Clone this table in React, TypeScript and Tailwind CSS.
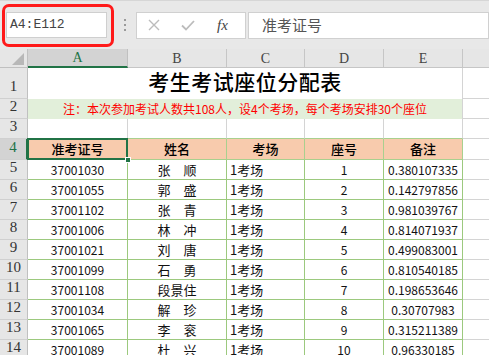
import React from "react";

const cjk = { fontFamily: "'Noto Sans CJK SC', 'Liberation Sans', sans-serif" };
const serif = { fontFamily: "'Liberation Serif', 'Noto Sans CJK SC', serif" };

const rows = [
  ["37001030", "张　顺", "1考场", "1", "0.380107335"],
  ["37001055", "郭　盛", "1考场", "2", "0.142797856"],
  ["37001102", "张　青", "1考场", "3", "0.981039767"],
  ["37001006", "林　冲", "1考场", "4", "0.814071937"],
  ["37001021", "刘　唐", "1考场", "5", "0.499083001"],
  ["37001099", "石　勇", "1考场", "6", "0.810540185"],
  ["37001108", "段景住", "1考场", "7", "0.198653646"],
  ["37001034", "解　珍", "1考场", "8", "0.30707983"],
  ["37001065", "李　衮", "1考场", "9", "0.315211389"],
  ["37001089", "杜　兴", "1考场", "10", "0.96330185"],
];

const RowHead = ({ n, h, active }: { n: number; h: string; active?: boolean }) => (
  <div
    className={`${h} w-[28px] shrink-0 flex items-end justify-center pb-[1px] text-[15px] border-b border-[#d0d0d0] ${
      active ? "bg-[#d3d3d3] text-[#217346] border-r-2 border-r-[#217346]" : "bg-[#e6e6e6] text-[#333] border-r border-r-[#c0c0c0]"
    }`}
    style={serif}
  >
    {n}
  </div>
);

const Rest = ({ h }: { h: string }) => <div className={`${h} flex-1 border-b border-b-[#d4d4d4]`} />;

export default function App() {
  return (
    <div className="w-[489px] h-[355px] overflow-hidden bg-white" style={cjk}>
      {/* toolbar */}
      <div className="h-[49px] bg-[#e8e8e8] border-t border-[#d6d6d6] flex items-center pl-[2px]">
        <div className="w-[112px] h-[43px] border-[3px] border-[#ff1a1a] rounded-[7px] flex items-center pl-[1px]">
          <div className="w-[101px] h-[26px] bg-white border border-[#cfcfcf] flex items-center pl-[3px] text-[13px] text-[#444]" style={{ fontFamily: "'Liberation Mono', monospace" }}>
            A4:E112
          </div>
        </div>
        <div className="w-[22px] flex flex-col items-center gap-[3px]">
          <span className="w-[2px] h-[2px] bg-[#9a9a9a]" />
          <span className="w-[2px] h-[2px] bg-[#9a9a9a]" />
          <span className="w-[2px] h-[2px] bg-[#9a9a9a]" />
        </div>
        <div className="w-[110px] h-[27px] bg-white border border-[#d0d0d0] flex items-center pl-[10px] gap-[19px]">
          <svg width="14" height="14" viewBox="0 0 14 14" stroke="#bcbcbc" strokeWidth="1.4" fill="none">
            <path d="M2 2 L12 12 M12 2 L2 12" />
          </svg>
          <svg width="16" height="14" viewBox="0 0 16 14" stroke="#bcbcbc" strokeWidth="1.8" fill="none">
            <path d="M2 7.5 L6 11.5 L14 3" />
          </svg>
          <span className="text-[15px] italic text-[#444] pl-[2px]" style={serif}>
            fx
          </span>
        </div>
        <div className="flex-1 h-[27px] ml-[2px] bg-white border border-[#d0d0d0] flex items-center pl-[13px] text-[15px] text-[#555]">
          准考证号
        </div>
      </div>

      {/* column header */}
      <div className="flex h-[19px] text-[14px] text-[#444]" style={serif}>
        <div className="w-[28px] shrink-0 bg-[#e6e6e6] border-r border-b border-[#c0c0c0] flex items-end justify-end pr-[3px] pb-[2px]">
          <svg width="12" height="12" viewBox="0 0 12 12">
            <path d="M12 0 L12 12 L0 12 Z" fill="#b8b8b8" />
          </svg>
        </div>
        <div className="w-[100px] shrink-0 bg-[#d3d3d3] text-[#217346] border-r border-r-[#c0c0c0] border-b-2 border-b-[#217346] flex items-center justify-center">A</div>
        <div className="w-[99px] shrink-0 bg-[#e6e6e6] border-r border-b border-[#c6c6c6] flex items-center justify-center">B</div>
        <div className="w-[78px] shrink-0 bg-[#e6e6e6] border-r border-b border-[#c6c6c6] flex items-center justify-center">C</div>
        <div className="w-[79px] shrink-0 bg-[#e6e6e6] border-r border-b border-[#c6c6c6] flex items-center justify-center">D</div>
        <div className="w-[79px] shrink-0 bg-[#e6e6e6] border-r border-b border-[#c6c6c6] flex items-center justify-center">E</div>
        <div className="flex-1 bg-[#e6e6e6] border-b border-[#c6c6c6]" />
      </div>

      {/* row 1 */}
      <div className="flex">
        <RowHead n={1} h="h-[31px]" />
        <div className="h-[31px] w-[435px] shrink-0 border-r border-[#d4d4d4] flex items-end justify-center pb-[2px] text-[21px] font-medium text-black tracking-[0.5px]">
          考生考试座位分配表
        </div>
        <Rest h="h-[31px]" />
      </div>

      {/* row 2 */}
      <div className="flex">
        <RowHead n={2} h="h-[20px]" />
        <div className="h-[20px] w-[435px] shrink-0 bg-[#e2efda] border-r border-[#d4d4d4] flex items-center justify-center text-[12px] text-[#ff0000]">
          注：本次参加考试人数共108人，设4个考场，每个考场安排30个座位
        </div>
        <Rest h="h-[20px]" />
      </div>

      {/* row 3 */}
      <div className="flex">
        <RowHead n={3} h="h-[20px]" />
        <div className="h-[20px] w-[100px] shrink-0 border-r border-r-[#d4d4d4] border-b border-b-[#a9d08e]" />
        <div className="h-[20px] w-[99px] shrink-0 border-r border-r-[#d4d4d4] border-b border-b-[#a9d08e]" />
        <div className="h-[20px] w-[78px] shrink-0 border-r border-r-[#d4d4d4] border-b border-b-[#a9d08e]" />
        <div className="h-[20px] w-[79px] shrink-0 border-r border-r-[#d4d4d4] border-b border-b-[#a9d08e]" />
        <div className="h-[20px] w-[79px] shrink-0 border-r border-r-[#d4d4d4] border-b border-b-[#a9d08e]" />
        <Rest h="h-[20px]" />
      </div>

      {/* row 4 header */}
      <div className="flex text-[13px] font-medium text-black">
        <RowHead n={4} h="h-[21px]" active />
        <div className="relative h-[21px] w-[100px] shrink-0 bg-[#f8cbad] border-r border-b border-[#a9d08e] flex items-center justify-center">
          准考证号
          <div className="absolute -left-[1px] -top-[1px] -right-[1px] -bottom-[1px] border-2 border-[#217346]" />
          <div className="absolute -right-[4px] -bottom-[4px] w-[6px] h-[6px] bg-[#217346] border border-white" />
        </div>
        <div className="h-[21px] w-[99px] shrink-0 bg-[#f8cbad] border-r border-b border-[#a9d08e] flex items-center justify-center">姓名</div>
        <div className="h-[21px] w-[78px] shrink-0 bg-[#f8cbad] border-r border-b border-[#a9d08e] flex items-center justify-center">考场</div>
        <div className="h-[21px] w-[79px] shrink-0 bg-[#f8cbad] border-r border-b border-[#a9d08e] flex items-center justify-center">座号</div>
        <div className="h-[21px] w-[79px] shrink-0 bg-[#f8cbad] border-r border-b border-[#a9d08e] flex items-center justify-center">备注</div>
        <Rest h="h-[21px]" />
      </div>

      {/* data rows */}
      {rows.map((r, i) => (
        <div key={i} className="flex text-[12px] text-[#111]">
          <RowHead n={i + 5} h="h-[20px]" />
          <div className="h-[20px] w-[100px] shrink-0 border-r border-b border-[#9cc97e] flex items-center justify-center">{r[0]}</div>
          <div className="h-[20px] w-[99px] shrink-0 border-r border-b border-[#9cc97e] flex items-center justify-center text-[13px]">{r[1]}</div>
          <div className="h-[20px] w-[78px] shrink-0 border-r border-b border-[#9cc97e] flex items-center pl-[3px] text-[13px]">{r[2]}</div>
          <div className="h-[20px] w-[79px] shrink-0 border-r border-b border-[#9cc97e] flex items-center justify-center">{r[3]}</div>
          <div className="h-[20px] w-[79px] shrink-0 border-r border-b border-[#9cc97e] flex items-center justify-center">{r[4]}</div>
          <Rest h="h-[20px]" />
        </div>
      ))}
    </div>
  );
}
